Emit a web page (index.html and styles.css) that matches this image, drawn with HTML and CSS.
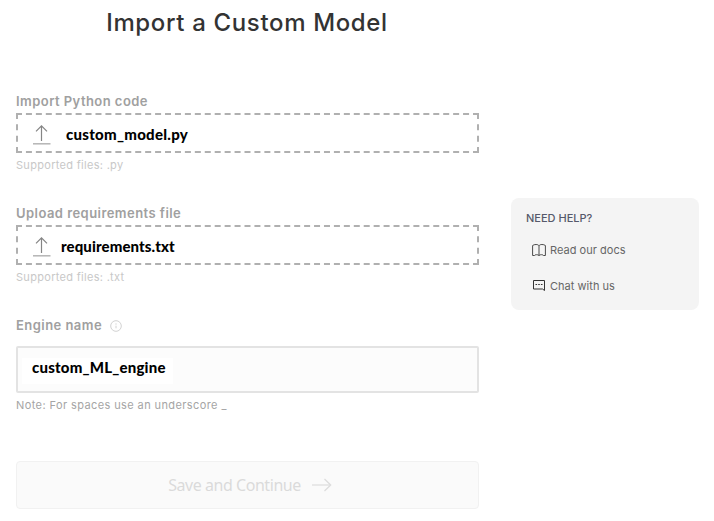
FILE: index.html
```html
<!DOCTYPE html>
<html lang="en">
<head>
<meta charset="utf-8">
<title>Import a Custom Model</title>
<link rel="stylesheet" href="styles.css">
</head>
<body>
<main class="page">
  <form class="form">
    <h1 class="title"><span>Import a Custom Model</span></h1>
    <section class="field">
      <div class="label"><span>Import Python code</span></div>
      <div class="drop">
        <svg class="upload" width="18" height="22" viewBox="0 0 18 22" fill="none"><path d="M8.500 18V3M3 8.300L8.500 2.800l5.500 5.500" stroke="#858585" stroke-width="1.2"/><path d="M0 20.800h17.500" stroke="#b5b5b5" stroke-width="1.5"/></svg>
        <span class="file file-model">custom_model.py</span>
      </div>
      <div class="hint"><span>Supported files: .py</span></div>
    </section>
    <section class="field">
      <div class="label"><span>Upload requirements file</span></div>
      <div class="drop">
        <svg class="upload" width="18" height="22" viewBox="0 0 18 22" fill="none"><path d="M8.500 18V3M3 8.300L8.500 2.800l5.500 5.500" stroke="#858585" stroke-width="1.2"/><path d="M0 20.800h17.500" stroke="#b5b5b5" stroke-width="1.5"/></svg>
        <span class="file file-req">requirements.txt</span>
      </div>
      <div class="hint"><span>Supported files: .txt</span></div>
    </section>
    <section class="engine">
      <div class="label"><span>Engine name</span>
        <svg class="info" width="12" height="12" viewBox="0 0 12 12" fill="none"><circle cx="6" cy="6" r="5.300" stroke="#d2d2d2"/><path d="M6 3.400v1.300M6 5.700v2.600" stroke="#d2d2d2"/></svg>
      </div>
      <div class="input"><span class="value"><span class="file file-engine">custom_ML_engine</span></span></div>
      <div class="hint note"><span>Note: For spaces use an underscore _</span></div>
    </section>
    <button class="save" type="button"><span>Save and Continue</span>
      <svg width="20" height="14" viewBox="0 0 20 14" fill="none"><path d="M0 7h18.500" stroke="#e4e4e4" stroke-width="1.600"/><path d="M12.500 1L18.700 7l-6.200 6" stroke="#dcdcdc" stroke-width="1.300"/></svg>
    </button>
  </form>
  <aside class="help">
    <h2 class="help-title"><span>NEED HELP?</span></h2>
    <a class="link"><svg width="14" height="14" viewBox="0 0 14 14" fill="none" stroke="#4a4a4a"><path d="M7 2.800v9.700M7 2.800C6.500 1.800 5.200 1.500 4 1.500S1.500 1.800.6 2.500v10h2c0-1 3.200-1.200 4.400 0 1.200-1.200 4.400-1 4.400 0h2v-10c-.9-.7-2.200-1-3.400-1s-2.500.3-3 1.300z"/></svg><span>Read our docs</span></a>
    <a class="link chat"><svg width="14" height="14" viewBox="0 0 14 14" fill="none" stroke="#333"><path d="M1.500 1.500h11v10l-2-1.500h-9z"/><path d="M3.500 5.500h7" stroke-dasharray="1.600 1.100" stroke-width="1.100"/></svg><span>Chat with us</span></a>
  </aside>
</main>
</body>
</html>
```
FILE: styles.css
```css
* { box-sizing: border-box; }
body { margin: 0; background: #fff; font-family: Inter, sans-serif; }
.page { display: flex; gap: 32px; align-items: flex-start; padding: 0 15px 0 16px; width: 714px; height: 521px; overflow: hidden; }
.form { width: 463px; }
.title { margin: 0; height: 93px; padding: 7px 1px 0 0; text-align: center; font-size: 24px; line-height: 31px; font-weight: 500; letter-spacing: .65px; color: #333; }
.field { height: 112px; }
.label { display: flex; align-items: center; height: 20px; padding-bottom: 3px; font-size: 13px; line-height: 17px; font-weight: 600; letter-spacing: .45px; color: #a0a0a0; }
.drop { display: flex; align-items: center; height: 40px; padding-left: 15px; border: 2px dashed #b0b0b0; }
.upload { flex: none; margin-top: 2px; }
.file { font-family: Lato, sans-serif; font-size: 15px; line-height: 20px; font-weight: 900; letter-spacing: .2px; color: #000; white-space: nowrap; }
.file-model { margin: 2px 0 0 15px; letter-spacing: .27px; }
.file-req { margin: 1px 0 0 10px; letter-spacing: .1px; }
.hint { height: 24px; padding-top: 4px; font-size: 11px; line-height: 16px; letter-spacing: .3px; color: #c8c8c8; }
.engine { height: 144px; }
.info { margin-left: 8px; }
.input { display: flex; align-items: center; height: 47px; margin-top: 9px; padding-left: 4px; border: 2px solid #e3e3e3; border-radius: 2px; background: #fcfcfc; }
.value { display: flex; align-items: center; width: 151px; height: 26px; margin-top: 2px; padding-left: 10px; background: #fff; }
.file-engine { margin-top: -7px; }
.note { letter-spacing: .4px; color: #a5a5a5; }
.save { display: flex; align-items: center; justify-content: center; gap: 11px; width: 100%; height: 48px; padding: 0 0 0 5px; border: 1px solid #f1f1f1; border-radius: 4px; background: #fafafa; color: #dadada; font: 400 16px/22px "Noto Sans", sans-serif; letter-spacing: -.45px; }
.help { width: 188px; height: 112px; margin-top: 198px; padding: 12px 15px; border-radius: 8px; background: #f4f4f4; }
.help-title { margin: 0 0 15px; font-size: 11px; line-height: 16px; font-weight: 500; color: #56596b; }
.link { display: flex; align-items: center; gap: 4px; height: 18px; margin-left: 6px; font-size: 11px; line-height: 16px; color: #666; letter-spacing: .03px; }
.chat { margin-top: 18px; }
```
